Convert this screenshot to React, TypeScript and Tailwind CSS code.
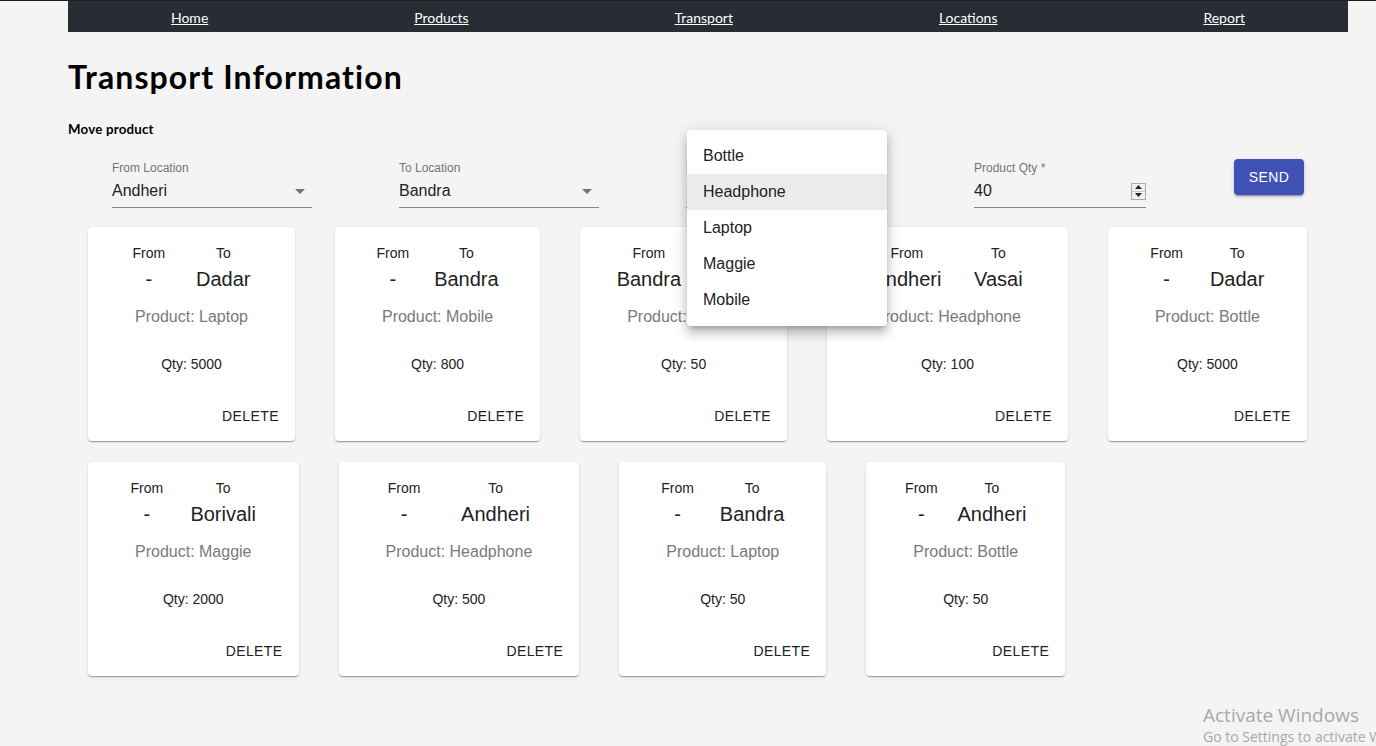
import React from "react";

type Move = { from: string; to: string; product: string; qty: number };

const row: Move[] = [
  { from: "-", to: "Dadar", product: "Laptop", qty: 5000 },
  { from: "-", to: "Bandra", product: "Mobile", qty: 800 },
  { from: "Bandra", to: "Dadar", product: "Laptop", qty: 50 },
  { from: "Andheri", to: "Vasai", product: "Headphone", qty: 100 },
  { from: "-", to: "Dadar", product: "Bottle", qty: 5000 },
  { from: "-", to: "Borivali", product: "Maggie", qty: 2000 },
  { from: "-", to: "Andheri", product: "Headphone", qty: 500 },
  { from: "-", to: "Bandra", product: "Laptop", qty: 50 },
  { from: "-", to: "Andheri", product: "Bottle", qty: 50 },
];

const sysFont = { fontFamily: "Lato, 'Noto Sans', sans-serif" };
const arial = { fontFamily: "'Liberation Sans', Arial, sans-serif" };

function Arrow() {
  return (
    <svg width="10" height="5" viewBox="0 0 10 5" className="mr-[7px]">
      <path d="M0 0 L10 0 L5 5 Z" fill="#757575" />
    </svg>
  );
}

function SelectField({ label, value }: { label: string; value: string }) {
  return (
    <div className="w-[200px] flex flex-col" style={arial}>
      <div className="mt-[1px] text-[12px] leading-[14px] text-[#757575]">{label}</div>
      <div className="h-[33px] flex items-center justify-between border-b border-[#8a8a8a] text-[16px] text-[#222]">
        <span>{value}</span>
        <Arrow />
      </div>
    </div>
  );
}

function Card({ m }: { m: Move }) {
  return (
    <div
      className="bg-white rounded-[4px] flex flex-col shadow-[0px_2px_1px_-1px_rgba(0,0,0,0.2),0px_1px_1px_0px_rgba(0,0,0,0.14),0px_1px_3px_0px_rgba(0,0,0,0.12)]"
      style={arial}
    >
      <div className="px-[47px] pt-[18px] flex flex-col items-center">
        <div className="-mx-[18px] self-stretch flex">
          <div className="flex-auto flex flex-col items-center">
            <div className="text-[14px] leading-[16px] text-[#222]">From</div>
            <div className="mt-[5px] text-[20px] leading-[26px] text-[#222] whitespace-nowrap">{m.from}</div>
          </div>
          <div className="flex-auto flex flex-col items-center">
            <div className="text-[14px] leading-[16px] text-[#222]">To</div>
            <div className="mt-[5px] text-[20px] leading-[26px] text-[#222] whitespace-nowrap">{m.to}</div>
          </div>
        </div>
        <div className="mt-[15px] text-[16px] leading-[20px] text-[#7a7a7a] whitespace-nowrap">
          Product: {m.product}
        </div>
        <div className="mt-[29px] text-[14px] leading-[16px] text-[#222]">Qty: {m.qty}</div>
      </div>
      <div className="mt-[17px] px-[8px] pt-[9px] pb-[7px] flex justify-end">
        <div className="h-[36px] px-[8px] flex items-center text-[14px] tracking-[0.4px] text-[#222]">
          DELETE
        </div>
      </div>
    </div>
  );
}

export default function App() {
  return (
    <div className="relative w-[1376px] h-[746px] overflow-hidden bg-[#f4f4f4] border-t border-[#1c1c1c]">
      <div className="ml-[68px] w-[1280px]">
        <nav
          className="h-[31px] bg-[#282c34] flex justify-around items-center pt-[1px] text-[14px] text-white"
          style={sysFont}
        >
          <a className="underline">Home</a>
          <a className="underline">Products</a>
          <a className="underline">Transport</a>
          <a className="underline">Locations</a>
          <a className="underline">Report</a>
        </nav>
        <h1 className="mt-[25px] text-[32px] leading-[40px] font-bold tracking-[1.1px] text-black" style={sysFont}>
          Transport Information
        </h1>
        <h5 className="mt-[24px] text-[13.3px] leading-[16px] font-bold tracking-[0.2px] text-black" style={sysFont}>
          Move product
        </h5>
        <div className="mt-[23px] ml-[44px] flex items-start gap-[87px]">
          <SelectField label="From Location" value="Andheri" />
          <SelectField label="To Location" value="Bandra" />
          <SelectField label="Product" value="Headphone" />
          <div className="ml-[1px] w-[172px] flex flex-col" style={arial}>
            <div className="mt-[1px] text-[12px] leading-[14px] text-[#757575]">Product Qty *</div>
            <div className="h-[33px] flex items-center justify-between border-b border-[#8a8a8a] text-[16px] text-[#222]">
              <span>40</span>
              <div className="w-[15px] h-[17px] border border-[#a9a9a9] bg-[#f0f0f0] flex flex-col">
                <div className="flex-1 flex items-center justify-center border-b border-[#c8c8c8]">
                  <svg width="7" height="4" viewBox="0 0 7 4">
                    <path d="M0 4 L7 4 L3.5 0 Z" fill="#222" />
                  </svg>
                </div>
                <div className="flex-1 flex items-center justify-center">
                  <svg width="7" height="4" viewBox="0 0 7 4">
                    <path d="M0 0 L7 0 L3.5 4 Z" fill="#222" />
                  </svg>
                </div>
              </div>
            </div>
          </div>
          <button
            className="ml-[1px] -mt-[1px] w-[70px] h-[36px] rounded-[4px] bg-[#3f51b5] text-white text-[14px] tracking-[0.4px] shadow-[0px_3px_1px_-2px_rgba(0,0,0,0.2),0px_2px_2px_0px_rgba(0,0,0,0.14),0px_1px_5px_0px_rgba(0,0,0,0.12)]"
            style={arial}
          >
            SEND
          </button>
        </div>
        <div className="mt-[19px] ml-[20px] w-[1260px] flex flex-wrap gap-x-[40px] gap-y-[21px]">
          {row.map((m, i) => (
            <Card key={i} m={m} />
          ))}
        </div>
      </div>

      <div
        className="absolute left-[687px] top-[129px] w-[200px] bg-white rounded-[4px] py-[8px] shadow-[0px_5px_5px_-3px_rgba(0,0,0,0.2),0px_8px_10px_1px_rgba(0,0,0,0.14),0px_3px_14px_2px_rgba(0,0,0,0.12)]"
        style={arial}
      >
        {["Bottle", "Headphone", "Laptop", "Maggie", "Mobile"].map((p) => (
          <div
            key={p}
            className={
              "h-[36px] px-[16px] flex items-center text-[16px] text-[#222] " +
              (p === "Headphone" ? "bg-[#ebebeb]" : "")
            }
          >
            {p}
          </div>
        ))}
      </div>

      <div className="absolute left-[1203px] top-[702px] text-[#a8a8a8] whitespace-nowrap" style={{ fontFamily: "'Open Sans', sans-serif" }}>
        <div className="text-[19px] leading-[24px]">Activate Windows</div>
        <div className="text-[14px] leading-[20px]">Go to Settings to activate Windows.</div>
      </div>
    </div>
  );
}
